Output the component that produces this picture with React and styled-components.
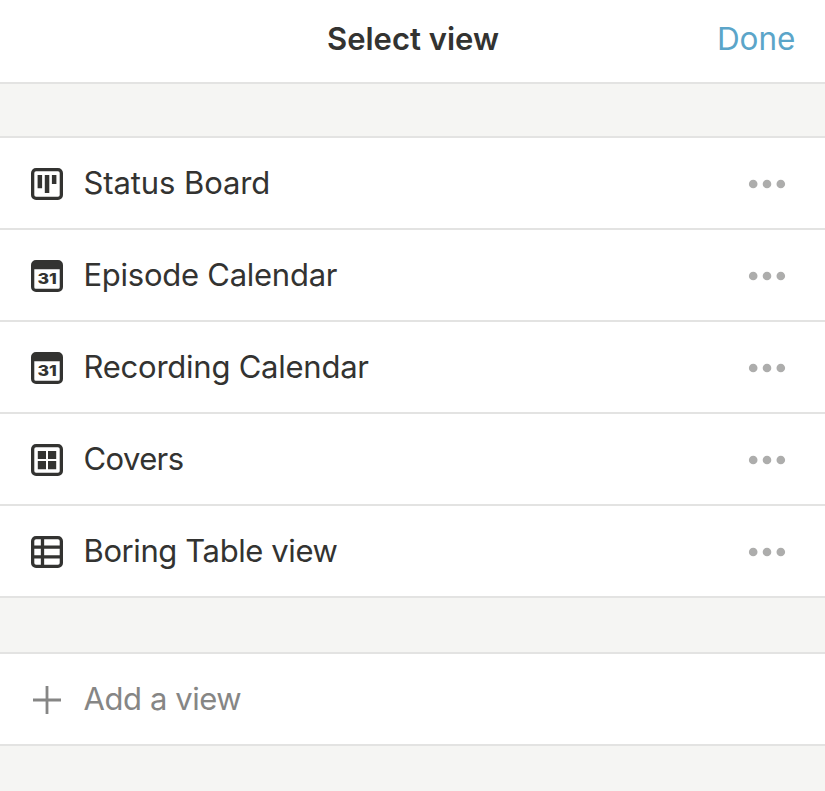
import React from 'react'
import styled, { createGlobalStyle } from 'styled-components'

const GlobalStyle = createGlobalStyle`
  body {
    margin: 0;
    background: #f5f5f3;
    font-family: Inter, 'Liberation Sans', sans-serif;
    color: #333331;
  }
`

const BoardIcon = () => (
  <Icon viewBox="0 0 32 32">
    <rect x="1.65" y="1.65" width="28.7" height="28.7" rx="3.4" fill="none" stroke="currentColor" strokeWidth="3.3" />
    <path d="M6.6 6.9h4.5v13.3H6.6zM13.8 6.9h4.5v18.2h-4.5zM20.9 6.9h4.5v9.2h-4.5z" />
  </Icon>
)

const CalendarIcon = () => (
  <Icon viewBox="0 0 32 32">
    <path
      fillRule="evenodd"
      d="M5 0h22a5 5 0 0 1 5 5v22a5 5 0 0 1-5 5H5a5 5 0 0 1-5-5V5a5 5 0 0 1 5-5zM3.3 9.2v18a1.5 1.5 0 0 0 1.5 1.5h22.4a1.5 1.5 0 0 0 1.5-1.5v-18z"
    />
    <CalendarDay x="6.4" y="24" textLength="19.4" lengthAdjust="spacingAndGlyphs">
      31
    </CalendarDay>
  </Icon>
)

const GalleryIcon = () => (
  <Icon viewBox="0 0 32 32">
    <rect x="1.65" y="1.65" width="28.7" height="28.7" rx="3.4" fill="none" stroke="currentColor" strokeWidth="3.3" />
    <path d="M6.8 6.9h8.2v8.1H6.8zM17 6.9h8.2v8.1H17zM6.8 17h8.2v8.2H6.8zM17 17h8.2v8.2H17z" />
  </Icon>
)

const TableIcon = () => (
  <Icon viewBox="0 0 32 32">
    <g fill="none" stroke="currentColor" strokeWidth="3.3">
      <rect x="1.65" y="1.65" width="28.7" height="28.7" rx="3.4" />
      <path d="M11.5 2v28M2 11.1h28M2 20.8h28" />
    </g>
  </Icon>
)

const PlusIcon = () => (
  <Icon viewBox="0 0 32 32">
    <path d="M16 2v28M2 16h28" fill="none" stroke="currentColor" strokeWidth="2.8" />
  </Icon>
)

const MoreIcon = () => (
  <Dots viewBox="0 0 38 10">
    <circle cx="5.2" cy="5" r="4.3" />
    <circle cx="19" cy="5" r="4.3" />
    <circle cx="32.8" cy="5" r="4.3" />
  </Dots>
)

const views = [
  { name: 'Status Board', icon: BoardIcon, spacing: -0.1 },
  { name: 'Episode Calendar', icon: CalendarIcon, spacing: -0.26 },
  { name: 'Recording Calendar', icon: CalendarIcon, spacing: -0.24 },
  { name: 'Covers', icon: GalleryIcon, spacing: -0.6 },
  { name: 'Boring Table view', icon: TableIcon, spacing: -0.4 },
]

const ViewRow = ({ name, icon: ViewIcon, spacing }) => (
  <Row>
    <ViewIcon />
    <Label $spacing={spacing}>{name}</Label>
    <MoreButton aria-label="More">
      <MoreIcon />
    </MoreButton>
  </Row>
)

const App = () => (
  <Page>
    <GlobalStyle />
    <Header>
      <Title>Select view</Title>
      <DoneButton>Done</DoneButton>
    </Header>
    <Group $gap={52}>
      {views.map((view) => (
        <ViewRow key={view.name} {...view} />
      ))}
    </Group>
    <Group $gap={54}>
      <Row $muted>
        <PlusIcon />
        <Label $spacing={-0.42}>Add a view</Label>
      </Row>
    </Group>
  </Page>
)

const Page = styled.div`
  min-height: 791px;
`
const Header = styled.header`
  display: grid;
  grid-template-columns: 1fr auto 1fr;
  align-items: center;
  box-sizing: border-box;
  height: 84px;
  padding: 0 29.5px 4px 30.5px;
  background: #ffffff;
  border-bottom: 2px solid #e3e3e2;
`
const Title = styled.h1`
  grid-column: 2;
  margin: 0;
  font-size: 31px;
  font-weight: 600;
  line-height: 40px;
  white-space: nowrap;
`
const DoneButton = styled.button`
  justify-self: end;
  padding: 0;
  border: none;
  background: none;
  color: #5ba5c9;
  font: inherit;
  font-size: 31.5px;
  line-height: 40px;
`
const Group = styled.section`
  margin-top: ${({ $gap }) => $gap}px;
  border-top: 2px solid #e3e3e2;
`
const Row = styled.div`
  display: flex;
  align-items: center;
  box-sizing: border-box;
  height: 92px;
  padding: 2px 39px 0 31px;
  background: #ffffff;
  border-bottom: 2px solid #e3e3e2;
  color: ${({ $muted }) => ($muted ? '#868685' : '#333331')};
`
const Icon = styled.svg`
  flex: none;
  width: 32px;
  height: 32px;
  fill: currentColor;
`
const CalendarDay = styled.text`
  font-family: Inter, sans-serif;
  font-size: 15px;
  font-weight: 800;
`
const Label = styled.span`
  flex: 1;
  margin: -2px 0 0 20.5px;
  font-size: 31px;
  line-height: 40px;
  letter-spacing: ${({ $spacing }) => $spacing}px;
  white-space: nowrap;
`
const MoreButton = styled.button`
  display: flex;
  padding: 0;
  border: none;
  background: none;
`
const Dots = styled.svg`
  width: 38px;
  height: 10px;
  fill: #adadac;
`

export default App
